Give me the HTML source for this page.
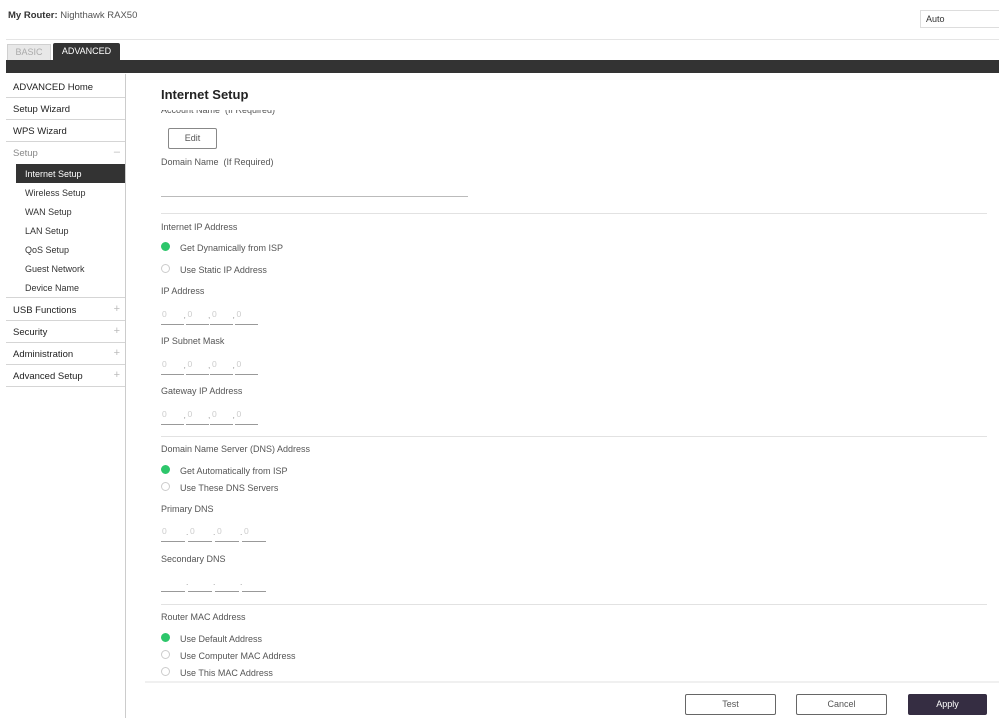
<!DOCTYPE html><html><head><style>
*{margin:0;padding:0;box-sizing:border-box}
body{width:999px;height:718px;overflow:hidden;background:#fff;font-family:"Liberation Sans",sans-serif;color:#333;position:relative}
.a{position:absolute;white-space:nowrap}
.s{font-size:9px;color:#555}
.nav{position:absolute;left:6px;width:119px;height:22px;border-bottom:1px solid #d5d5d5;font-size:9.5px;padding:6px 0 0 7px;color:#222}
.sub{position:absolute;left:16px;width:109px;height:19px;font-size:9px;padding:5px 0 0 9px;color:#333}
.pl{position:absolute;right:5px;top:4px;color:#bbb;font-size:11px}
.hr{position:absolute;left:161px;width:826px;height:1px;background:#e2e2e2}
.r{position:absolute;left:161px;width:9px;height:9px;border-radius:50%;border:1px solid #ccc}
.r.on{background:#2dc66b;border-color:#2dc66b}
.ip{position:absolute;width:23px;height:1px;background:#999}
.ipt{position:absolute;font-size:8.5px;color:#ccc}
.btn{position:absolute;height:21px;border:1px solid #666;border-radius:2px;font-size:9px;text-align:center;line-height:19px;color:#555}
</style></head><body>
<div class="a" style="left:8px;top:10px;font-size:9.5px"><b style="font-weight:600">My Router:</b> <span style="color:#555">Nighthawk RAX50</span></div>
<div class="a" style="left:920px;top:10px;width:79px;height:18px;border:1px solid #ddd;border-right:none;font-size:9px;padding:3px 5px">Auto</div>
<div class="a" style="left:6px;top:39px;width:993px;height:1px;background:#e5e5e5"></div>
<div class="a" style="left:7px;top:44px;width:44px;height:17px;background:#e8e8e8;border:1px solid #d0d0d0;font-size:9px;color:#aaa;text-align:center;line-height:15px">BASIC</div>
<div class="a" style="left:53px;top:43px;width:67px;height:18px;background:#333;border-radius:2px 2px 0 0;font-size:9px;color:#fff;text-align:center;line-height:17px">ADVANCED</div>
<div class="a" style="left:6px;top:60px;width:993px;height:13px;background:#333"></div>
<div class="a" style="left:125px;top:74px;width:1px;height:644px;background:#ccc"></div>
<div class="nav" style="top:76px">ADVANCED Home</div>
<div class="nav" style="top:98px">Setup Wizard</div>
<div class="nav" style="top:120px">WPS Wizard</div>
<div class="nav" style="top:142px;color:#888;border-bottom:none">Setup<span class="pl">–</span></div>
<div class="sub" style="top:164px;background:#333;color:#fff">Internet Setup</div>
<div class="sub" style="top:183px">Wireless Setup</div>
<div class="sub" style="top:202px">WAN Setup</div>
<div class="sub" style="top:221px">LAN Setup</div>
<div class="sub" style="top:240px">QoS Setup</div>
<div class="sub" style="top:259px">Guest Network</div>
<div class="sub" style="top:278px">Device Name</div>
<div class="a" style="left:6px;top:297px;width:119px;height:1px;background:#d5d5d5"></div>
<div class="nav" style="top:299px">USB Functions<span class="pl">+</span></div>
<div class="nav" style="top:321px">Security<span class="pl">+</span></div>
<div class="nav" style="top:343px">Administration<span class="pl">+</span></div>
<div class="nav" style="top:365px">Advanced Setup<span class="pl">+</span></div>

<div class="a" style="left:161px;top:87px;font-size:13px;font-weight:bold;color:#222">Internet Setup</div>
<div class="a" style="left:161px;top:110px;height:6px;width:200px;overflow:hidden"><div class="a s" style="left:0;top:-5px">Account Name &nbsp;(If Required)</div></div>
<div class="btn" style="left:168px;top:128px;width:49px;border-color:#888">Edit</div>
<div class="a s" style="left:161px;top:157px">Domain Name &nbsp;(If Required)</div>
<div class="a" style="left:161px;top:196px;width:307px;height:1px;background:#bbb"></div>
<div class="hr" style="top:213px"></div>
<div class="a s" style="left:161px;top:222px">Internet IP Address</div>
<div class="r on" style="top:242px"></div><div class="a s" style="left:180px;top:243px">Get Dynamically from ISP</div>
<div class="r" style="top:264px"></div><div class="a s" style="left:180px;top:265px">Use Static IP Address</div>
<div class="a s" style="left:161px;top:286px">IP Address</div>
<div class="a s" style="left:161px;top:336px">IP Subnet Mask</div>
<div class="a s" style="left:161px;top:386px">Gateway IP Address</div>
<div class="hr" style="top:436px"></div>
<div class="a s" style="left:161px;top:444px">Domain Name Server (DNS) Address</div>
<div class="r on" style="top:465px"></div><div class="a s" style="left:180px;top:466px">Get Automatically from ISP</div>
<div class="r" style="top:482px"></div><div class="a s" style="left:180px;top:483px">Use These DNS Servers</div>
<div class="a s" style="left:161px;top:504px">Primary DNS</div>
<div class="a s" style="left:161px;top:554px">Secondary DNS</div>
<div class="hr" style="top:604px"></div>
<div class="a s" style="left:161px;top:612px">Router MAC Address</div>
<div class="r on" style="top:633px"></div><div class="a s" style="left:180px;top:634px">Use Default Address</div>
<div class="r" style="top:650px"></div><div class="a s" style="left:180px;top:651px">Use Computer MAC Address</div>
<div class="r" style="top:667px"></div><div class="a s" style="left:180px;top:668px">Use This MAC Address</div>
<div class="a" style="left:145px;top:681px;width:854px;height:2px;background:#f0f0f0"></div>
<div class="btn" style="left:685px;top:694px;width:91px">Test</div>
<div class="btn" style="left:796px;top:694px;width:91px">Cancel</div>
<div class="btn" style="left:908px;top:694px;width:79px;background:#352d42;border-color:#352d42;color:#fff">Apply</div>

<div id="ips"></div>
<script>
var h='';
[[324,1],[374,1],[424,1],[541,1],[591,0]].forEach(function(r,k){
 var y=r[0],w=k>2?24:23,gap=k>2?27:24.5;
 for(var i=0;i<4;i++){var x=161+i*gap;
  h+='<div class="ip" style="left:'+x+'px;top:'+y+'px;width:'+w+'px"></div>';
  if(i>0)h+='<div class="ipt" style="left:'+(x-2)+'px;top:'+(y-14)+'px;color:#999">'+(k>2?'.':',')+'</div>';
  if(r[1])h+='<div class="ipt" style="left:'+(x+(i?2:1))+'px;top:'+(y-15)+'px">0</div>';
 }});
document.getElementById('ips').innerHTML=h;
</script>
</body></html>
